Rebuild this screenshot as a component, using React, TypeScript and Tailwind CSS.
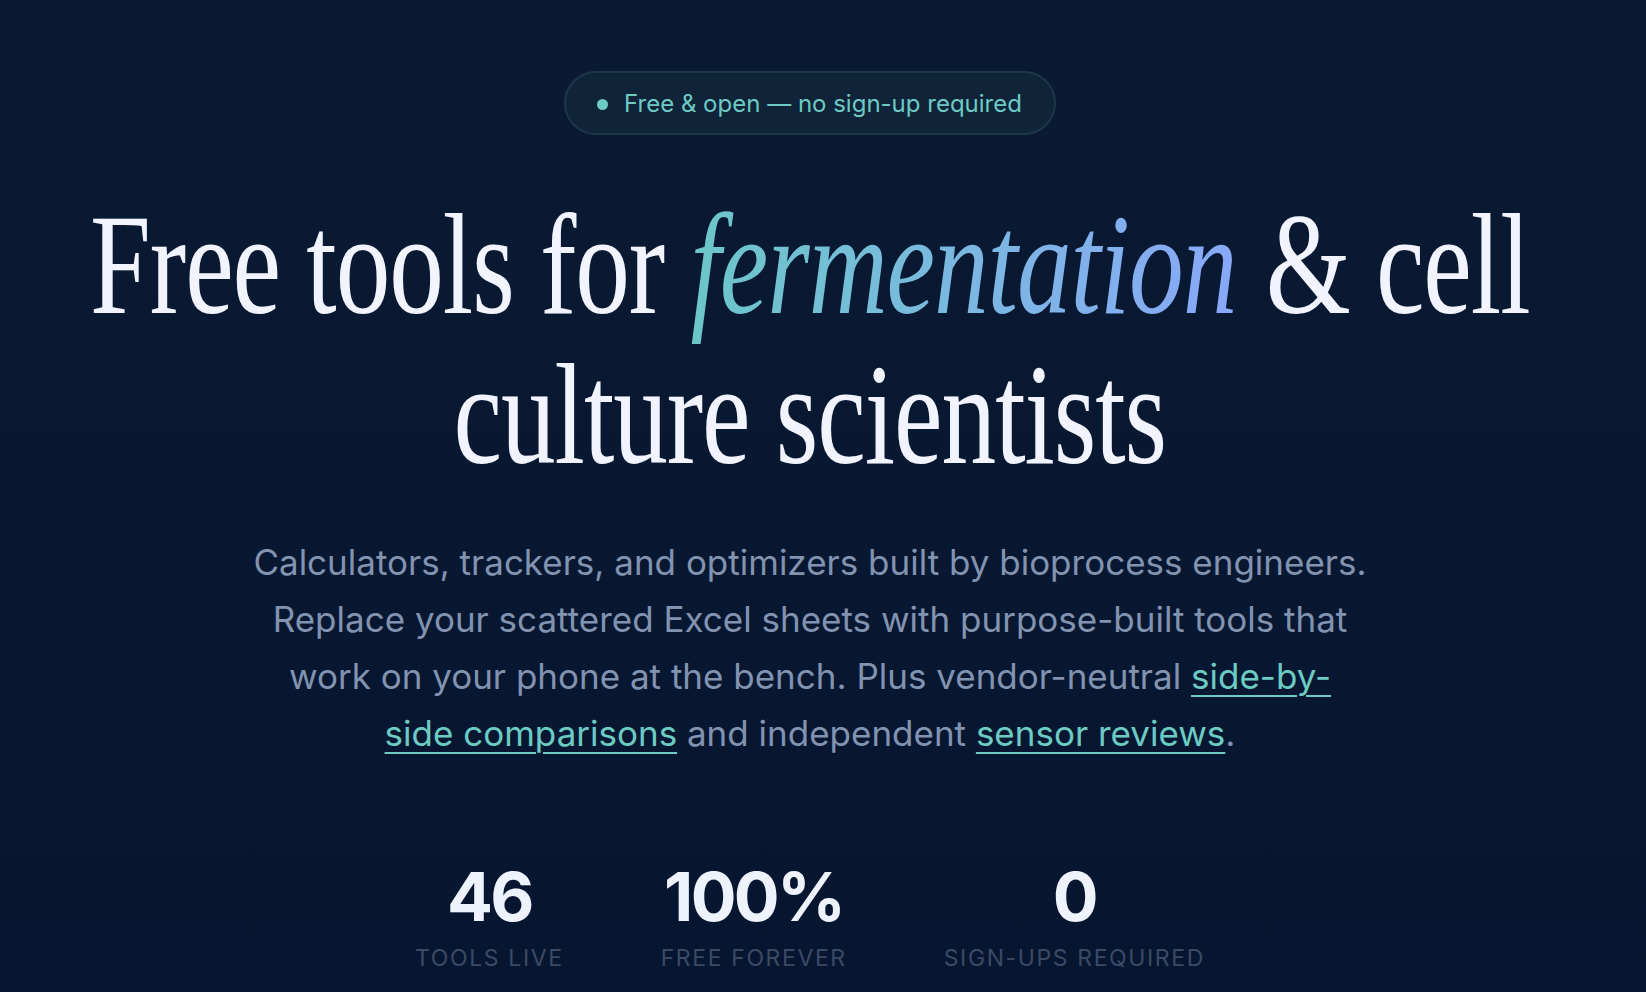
const stats = [
  { value: "46", label: "Tools live" },
  { value: "100%", label: "Free forever" },
  { value: "0", label: "Sign-ups required" },
];

export default function App() {
  return (
    <div className="min-h-screen w-full overflow-hidden bg-linear-to-b from-[#0b1a33] to-[#071630] font-['Inter',sans-serif]">
      <section className="flex flex-col items-center pt-[71px] pr-[26px]">
        {/* Badge */}
        <div className="flex h-[64px] items-center gap-4 rounded-full border-2 border-[#1d3749] bg-[#0f2339] pl-[31px] pr-[32px] pt-[2px] text-[24px] text-[#6ecac4]">
          <span className="h-[11px] w-[11px] rounded-full bg-[#6ecac4]" />
          <span>Free &amp; open — no sign-up required</span>
        </div>

        {/* Heading */}
        <h1 className="mt-[55px] w-max scale-x-[0.765] whitespace-nowrap text-center font-['Liberation_Serif',serif] text-[143px] font-normal leading-[150px] tracking-[-0.01em] text-[#f1f4fc]">
          Free tools for{" "}
          <em className="bg-linear-to-r from-[#6cc6c8] to-[#88a8f8] bg-clip-text pr-1 italic text-transparent">
            fermentation
          </em>{" "}
          &amp; cell
          <br />
          culture scientists
        </h1>

        {/* Intro */}
        <p className="mt-[44px] text-center text-[35px] leading-[57px] text-[#8293b0]">
          Calculators, trackers, and optimizers built by bioprocess engineers.
          <br />
          Replace your scattered Excel sheets with purpose-built tools that
          <br />
          work on your phone at the bench. Plus vendor-neutral{" "}
          <a href="#compare" className="text-[#6ccbc2] underline decoration-2 underline-offset-[6px]">
            side-by-
            <br />
            side comparisons
          </a>{" "}
          and independent{" "}
          <a href="#reviews" className="text-[#6ccbc2] underline decoration-2 underline-offset-[6px]">
            sensor reviews
          </a>
          .
        </p>

        {/* Stats */}
        <div className="mt-[100px] flex items-start gap-[97px]">
          {stats.map((s) => (
            <div key={s.label} className="flex flex-col items-center">
              <span className="text-[68px] font-bold leading-none tracking-[-0.04em] text-[#eef2fb]">
                {s.value}
              </span>
              <span className="mt-[17px] text-[23px] uppercase leading-none tracking-[0.07em] text-[#3a4a65]">
                {s.label}
              </span>
            </div>
          ))}
        </div>
      </section>
    </div>
  );
}
